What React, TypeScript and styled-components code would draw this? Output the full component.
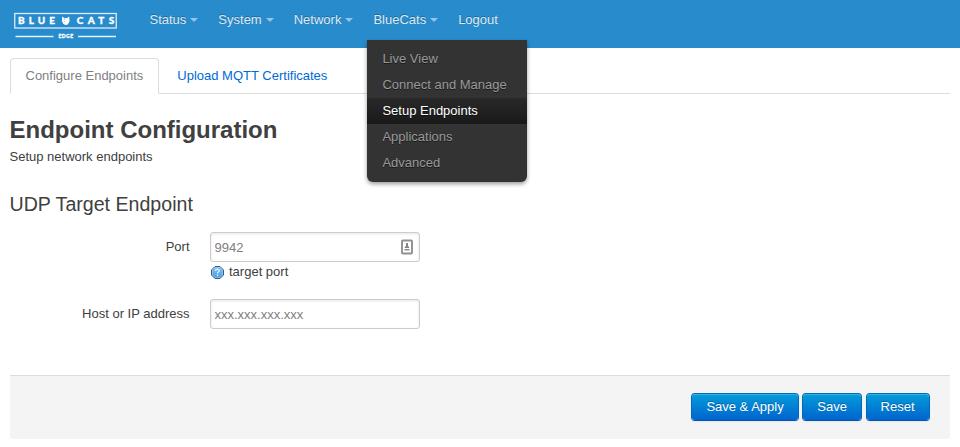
import React from "react";
import styled, { createGlobalStyle, css } from "styled-components";

const GlobalStyle = createGlobalStyle`
  * { box-sizing: border-box; }
  body {
    margin: 0;
    background: #fff;
    color: #404040;
    font: 13px/18px "Liberation Sans", Arial, sans-serif;
  }
`;

const TopBar = styled.header`
  display: flex;
  align-items: flex-start;
  height: 48px;
  background: #288bcc;
`;

const Brand = styled.a`
  width: 139.5px;
  height: 48px;
  svg { display: block; }
`;

const Nav = styled.nav`
  display: flex;
`;

const NavItem = styled.div`
  position: relative;
`;

const NavLink = styled.a`
  display: flex;
  align-items: center;
  padding: 10px 10px 11px;
  line-height: 19px;
  color: #dfe9f1;
  text-shadow: 0 -1px 0 rgba(0, 0, 0, 0.25);
  text-decoration: none;
`;

const Caret = styled.span`
  margin: 1px 0 0 4px;
  border: 4px solid transparent;
  border-top-color: #94c5e5;
  border-bottom: 0;
`;

const Menu = styled.ul`
  position: absolute;
  z-index: 10;
  top: 40px;
  left: 4px;
  width: 160px;
  margin: 0;
  padding: 6px 0;
  list-style: none;
  background: #333;
  border-radius: 0 0 6px 6px;
  box-shadow: 0 2px 4px rgba(0, 0, 0, 0.4);
`;

const MenuItem = styled.li<{ $active?: boolean }>`
  padding: 4px 15px;
  line-height: 18px;
  color: #999;
  white-space: nowrap;
  text-shadow: 0 1px 0 rgba(0, 0, 0, 0.5);
  ${(p) =>
    p.$active &&
    css`
      color: #fff;
      background: linear-gradient(#292929, #191919);
    `}
`;

const Page = styled.main`
  padding: 10px 10.5px 0 9.5px;
`;

const Tabs = styled.div`
  display: flex;
  height: 36px;
  border-bottom: 1px solid #ddd;
`;

const Tab = styled.a<{ $active?: boolean }>`
  height: 36px;
  margin-right: 2px;
  padding: 0 15px;
  line-height: 34px;
  color: #0069d6;
  border: 1px solid transparent;
  border-radius: 4px 4px 0 0;
  ${(p) =>
    p.$active &&
    css`
      color: gray;
      background: #fff;
      border-color: #ddd #ddd #fff;
    `}
`;

const Title = styled.h2`
  margin: 18px 0 0;
  font-size: 24px;
  line-height: 36px;
`;

const Description = styled.p`
  margin: 0;
`;

const Legend = styled.h3`
  margin: 18px 0 8px;
  font-size: 19.6px;
  font-weight: normal;
  line-height: 40px;
`;

const Field = styled.div`
  display: flex;
  height: 67px;
`;

const Label = styled.label`
  width: 180px;
  margin-right: 20px;
  padding-top: 6px;
  text-align: right;
`;

const Control = styled.div`
  width: 210px;
`;

const InputBox = styled.div`
  display: flex;
  align-items: center;
  height: 30px;
  padding-right: 6px;
  border: 1px solid #ccc;
  border-radius: 3px;
  box-shadow: inset 0 1px 3px rgba(0, 0, 0, 0.1);
`;

const Input = styled.input`
  flex: 1;
  min-width: 0;
  height: 28px;
  padding: 0 4px;
  border: 0;
  outline: 0;
  background: transparent;
  color: gray;
  font: inherit;
  &::placeholder { color: gray; }
`;

const Hint = styled.div`
  display: flex;
  align-items: center;
  gap: 5px;
  padding: 1px 0 0 1.5px;
`;

const Actions = styled.footer`
  display: flex;
  justify-content: flex-end;
  gap: 3.6px;
  height: 64px;
  margin-top: 9px;
  padding: 17px 20px;
  background: #f4f4f4;
  border-top: 1px solid #ddd;
  border-radius: 0 0 3px 3px;
`;

const Button = styled.button`
  height: 28px;
  padding: 4px 14px 5px;
  color: #fff;
  font: 13px/18px "Liberation Sans", Arial, sans-serif;
  text-shadow: 0 -1px 0 rgba(0, 0, 0, 0.25);
  background: linear-gradient(#049cdb, #0064cd) padding-box;
  border: 1px solid #0067c4;
  border-bottom-color: #0054b4;
  border-radius: 4px;
  box-shadow: inset 0 1px 0 rgba(255, 255, 255, 0.2), 0 1px 2px rgba(0, 0, 0, 0.05);
`;

const Logo = () => (
  <svg width="130" height="48" viewBox="0 0 130 48">
    <rect x="14.75" y="13.5" width="101.5" height="14.5" fill="none" stroke="#d9edfa" strokeWidth="1.3" />
    <g fill="#fff" stroke="#fff" strokeWidth=".3" fontFamily="Lato, sans-serif" fontWeight="900">
      <text x="18" y="24.3" fontSize="10" textLength="37" lengthAdjust="spacing">BLUE</text>
      <text x="76.7" y="24.3" fontSize="10" textLength="37.5" lengthAdjust="spacing">CATS</text>
      <text x="58.5" y="38.2" fontSize="5" textLength="14.5">EDGE</text>
    </g>
    <path d="M62.2 16.5L64.3 18.1H67L69.2 16.5L69.6 21.2L67.8 24.5L65.3 25L63.2 23.7L61.9 21Z" fill="#fff" />
    <path d="M64 18.3L65.2 20.3M63.5 21L65 22" stroke="#288bcc" strokeWidth=".5" />
    <path d="M15.5 36.5H53.5M78 36.5H116" stroke="#e4f2fb" strokeWidth="1.4" />
  </svg>
);

const ContactIcon = () => (
  <svg width="12" height="16" viewBox="0 0 12 16">
    <rect x="1" y="1.5" width="10" height="13" rx=".8" fill="#fff" stroke="#909090" strokeWidth="1.9" />
    <path d="M5 4H7V7L8.2 8V9H3.8V8L5 7Z" fill="#858585" />
    <path d="M3.5 10.7H8.5" stroke="#888" strokeWidth="1.5" />
  </svg>
);

const HelpIcon = () => (
  <svg width="13" height="13" viewBox="0 0 13 13">
    <defs>
      <linearGradient id="help" x1="0" y1="0" x2="0" y2="1">
        <stop stopColor="#8fc3ee" />
        <stop offset="1" stopColor="#459be2" />
      </linearGradient>
    </defs>
    <path d="M4 .5H9L12.5 4V9L9 12.5H4L.5 9V4Z" fill="url(#help)" stroke="#2c5f90" />
    <path d="M4 1.5H9L11.5 4V9L9 11.5H4L1.5 9V4Z" fill="none" stroke="#9dceef" strokeWidth=".6" />
    <path d="M4.7 5V4Q4.8 3.4 6.4 3.4Q8.4 3.4 8.4 4.8Q8.4 5.7 6.5 6.5V7.4M6.5 8.6V9.9" fill="none" stroke="#e6f4ff" strokeWidth="1.1" />
  </svg>
);

const navigation = ["Status", "System", "Network", "BlueCats", "Logout"];
const menuEntries = ["Live View", "Connect and Manage", "Setup Endpoints", "Applications", "Advanced"];

export default function App() {
  return (
    <>
      <GlobalStyle />
      <TopBar>
        <Brand aria-label="BlueCats Edge"><Logo /></Brand>
        <Nav>
          {navigation.map((name) => (
            <NavItem key={name}>
              <NavLink>
                {name}
                {name !== "Logout" && <Caret />}
              </NavLink>
              {name === "BlueCats" && (
                <Menu>
                  {menuEntries.map((entry) => (
                    <MenuItem key={entry} $active={entry === "Setup Endpoints"}>{entry}</MenuItem>
                  ))}
                </Menu>
              )}
            </NavItem>
          ))}
        </Nav>
      </TopBar>
      <Page>
        <Tabs>
          <Tab $active>Configure Endpoints</Tab>
          <Tab>Upload MQTT Certificates</Tab>
        </Tabs>
        <Title>Endpoint Configuration</Title>
        <Description>Setup network endpoints</Description>
        <Legend>UDP Target Endpoint</Legend>
        <Field>
          <Label htmlFor="port">Port</Label>
          <Control>
            <InputBox>
              <Input id="port" placeholder="9942" />
              <ContactIcon />
            </InputBox>
            <Hint><HelpIcon />target port</Hint>
          </Control>
        </Field>
        <Field>
          <Label htmlFor="host">Host or IP address</Label>
          <Control>
            <InputBox><Input id="host" placeholder="xxx.xxx.xxx.xxx" /></InputBox>
          </Control>
        </Field>
        <Actions>
          <Button>Save &amp; Apply</Button>
          <Button>Save</Button>
          <Button>Reset</Button>
        </Actions>
      </Page>
    </>
  );
}
